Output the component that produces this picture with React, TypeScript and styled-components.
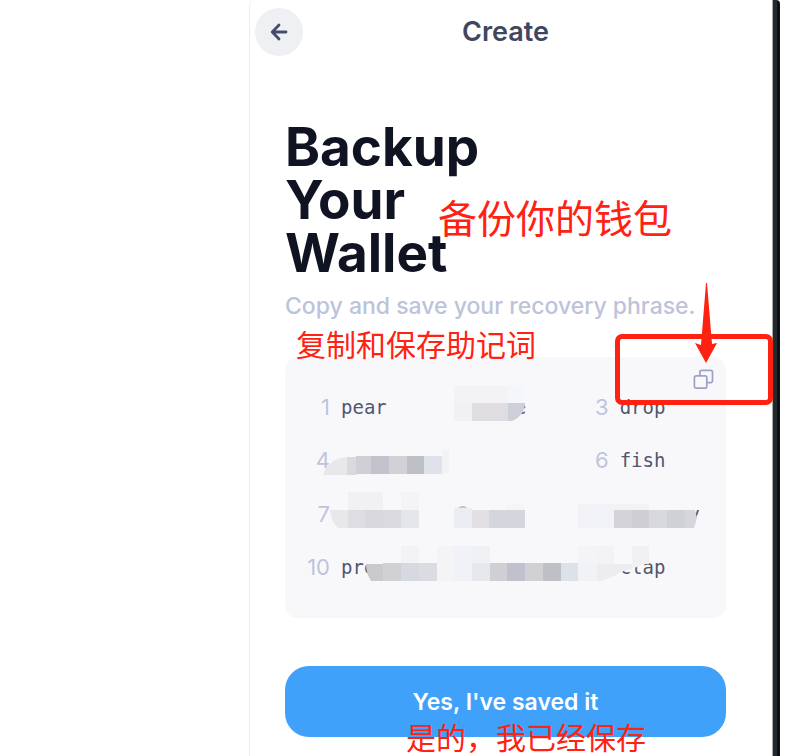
import React from "react";
import styled, { createGlobalStyle } from "styled-components";

const GlobalStyle = createGlobalStyle`
  *, *::before, *::after { box-sizing: border-box; }
  body { margin: 0; background: #fff; font-family: Inter, "Noto Sans CJK SC", sans-serif; }
`;

const RED = "#ff2112";

const Page = styled.div`
  display: flex;
  min-height: 100vh;
  padding: 0 20px 0 249px;
  overflow: hidden;
`;

const Screen = styled.main`
  flex: 1;
  min-width: 0;
  border-left: 1px solid #ededf0;
  border-top-left-radius: 6px;
`;

const DeviceEdge = styled.div`
  width: 8px;
  flex: none;
  border-left: 1px solid #a5a7a9;
  border-top-right-radius: 4px;
  background: linear-gradient(to right, #24292b 0 4px, #0b1016 4px);
`;

const Header = styled.header`
  display: grid;
  grid-template-columns: 48px 1fr 48px;
  align-items: center;
  padding: 8px 16px 0 5px;
`;

const BackButton = styled.button`
  display: grid;
  place-items: center;
  width: 48px;
  height: 48px;
  padding: 0;
  border: 0;
  border-radius: 50%;
  background: #eff0f4;
  color: #454c6d;
`;

const Title = styled.h1`
  margin: 0;
  text-align: center;
  font-size: 27px;
  line-height: 32px;
  font-weight: 600;
  color: #3f4760;
`;

const Content = styled.div`
  display: flex;
  flex-direction: column;
  padding: 65px 46px 0 35px;
`;

const Intro = styled.section`
  position: relative;
`;

const Heading = styled.h2`
  width: min-content;
  margin: 0;
  font-size: 53px;
  line-height: 53px;
  font-weight: 700;
  color: #101322;
`;

const Subtitle = styled.p`
  margin: 10px 0 0;
  font-size: 23px;
  line-height: 32px;
  font-weight: 500;
  white-space: nowrap;
  color: #bdc3da;
`;

const Note = styled.span<{ $size: number; $top: number; $left: number }>`
  position: absolute;
  z-index: 2;
  top: ${(p) => p.$top}px;
  left: ${(p) => p.$left}px;
  font-family: "Noto Sans CJK SC", sans-serif;
  font-size: ${(p) => p.$size}px;
  line-height: 34px;
  font-weight: 400;
  white-space: nowrap;
  color: ${RED};
  pointer-events: none;
`;

const Card = styled.section`
  position: relative;
  margin-top: 35px;
  padding: 23px 0 24px 23px;
  border-radius: 13px;
  background: #f8f8fb;
`;

const CopyButton = styled.button`
  position: absolute;
  top: 12px;
  right: 12px;
  display: grid;
  padding: 0;
  border: 0;
  background: none;
  color: #9ba2c6;
`;

const Phrase = styled.ol`
  display: grid;
  grid-template-columns: repeat(3, 1fr);
  grid-template-rows: repeat(4, 1fr);
  height: 214px;
  margin: 0;
  padding: 0;
  list-style: none;
`;

const Entry = styled.li`
  display: flex;
  align-items: center;
  gap: 11px;
  min-width: 0;
`;

const Index = styled.span`
  display: flex;
  justify-content: flex-end;
  width: 22px;
  flex: none;
  font-size: 22px;
  line-height: 28px;
  color: #bfc4dc;
`;

const Word = styled.span`
  font-family: "DejaVu Sans Mono", monospace;
  font-size: 19px;
  line-height: 28px;
  white-space: pre;
  color: #50576e;
`;

const Mosaic = styled.svg`
  position: absolute;
  inset: 0;
  pointer-events: none;
`;

const Highlight = styled.div`
  position: absolute;
  z-index: 2;
  top: -23px;
  right: -47px;
  width: 158px;
  height: 71px;
  border: 5px solid ${RED};
  border-radius: 7px;
  pointer-events: none;
`;

const Pointer = styled.svg`
  position: absolute;
  z-index: 2;
  top: -74px;
  right: 9px;
  pointer-events: none;
`;

const Actions = styled.div`
  position: relative;
  margin-top: 48px;
`;

const SaveButton = styled.button`
  display: block;
  width: 100%;
  height: 71px;
  padding: 0;
  border: 0;
  border-radius: 24px;
  background: #3fa1f9;
  font-family: inherit;
  font-size: 23px;
  font-weight: 600;
  color: #fff;
`;

const words = [
  { n: 1, word: "pear" },
  { n: 2, word: "   e" },
  { n: 3, word: "drop" },
  { n: 4, word: "" },
  { n: null, word: "" },
  { n: 6, word: "fish" },
  { n: 7, word: "" },
  { n: 8, word: "" },
  { n: null, word: "      y" },
  { n: 10, word: "pre" },
  { n: null, word: "" },
  { n: null, word: "clap" },
];

const tiles: [number, number, number, number, string][] = [
  [454, 386, 54, 18, "#f3f3f5"], [508, 386, 17, 18, "#f5f6fb"],
  [454, 403, 18, 18, "#f1f1f5"], [472, 403, 36, 18, "#dfdde1"],
  [347, 457, 9, 18, "#dadade"], [356, 456, 15, 18, "#cfcfd5"],
  [371, 456, 18, 18, "#c2c2cc"], [389, 456, 18, 18, "#d2d1d6"],
  [407, 456, 17, 18, "#bfc0c5"], [424, 456, 18, 18, "#dfe2ea"],
  [442, 450, 7, 24, "#f3f3f6"],
  [348, 492, 35, 18, "#f1f1f3"], [401, 492, 18, 18, "#f4f4f6"],
  [348, 510, 17, 18, "#dddde2"], [365, 510, 18, 18, "#d9d9dd"],
  [383, 510, 18, 18, "#dbdbdf"], [401, 510, 18, 18, "#e5e6e9"],
  [454, 508, 18, 20, "#ecedf2"], [472, 510, 17, 18, "#e2e0e3"],
  [489, 510, 36, 18, "#d4d5dd"], [507, 504, 18, 6, "#f5f5f8"],
  [578, 504, 18, 24, "#f3f2f6"], [596, 504, 18, 24, "#f1f3f8"],
  [614, 504, 35, 6, "#f3f3f5"], [614, 510, 18, 18, "#d4d3d9"],
  [632, 510, 17, 18, "#cfced4"], [649, 510, 18, 18, "#d8d9df"],
  [667, 510, 18, 18, "#d0d1d6"],
  [366, 555, 35, 9, "#f8f8fb"], [401, 546, 18, 18, "#f3f3f6"],
  [437, 546, 17, 35, "#f4f4f7"], [454, 546, 18, 35, "#f0f2f7"],
  [472, 546, 18, 18, "#f0f1f5"], [472, 563, 18, 18, "#e7e8ec"],
  [383, 563, 18, 18, "#d1d0d5"], [401, 563, 18, 18, "#d6d9e2"],
  [419, 563, 18, 18, "#dbdce1"], [490, 563, 17, 18, "#cfcfd4"],
  [507, 563, 18, 18, "#c0c1cc"], [525, 563, 18, 18, "#d0d0d5"],
  [543, 563, 18, 18, "#bfc0c5"], [561, 563, 17, 18, "#dde1e9"],
  [578, 546, 19, 18, "#f4f4f6"], [578, 563, 19, 18, "#f1f2f6"],
  [597, 546, 17, 18, "#f3f3f5"], [614, 546, 18, 18, "#f8f8fb"],
  [632, 546, 17, 18, "#f1f1f3"],
];

const shapes: [string, string][] = [
  ["M508 403h17c0 8-5 15-13 18h-4z", "#cdcfd9"],
  ["M323 475c3-10 11-17 24-18v18z", "#e8e7e9"],
  ["M330 510h18v18h-10c-5-5-7-11-8-18z", "#e8e8ea"],
  ["M685 510h10l2 8-3 10h-9z", "#d6d6db"],
  ["M366 564h17v17h-12c-3-5-5-10-5-17z", "#c9c9ce"],
  ["M597 564h17v12l-13 5h-4z", "#ededf1"],
  ["M614 564h18v5c-7 1-12 3-18 7z", "#ededf1"],
  ["M632 563h14c-5 2-9 4-14 6z", "#f1f1f4"],
];

function BackIcon() {
  return (
    <svg width="18" height="18" viewBox="0 0 18 18" fill="none" stroke="currentColor" strokeWidth="2.8" strokeLinecap="round" strokeLinejoin="round" aria-hidden="true">
      <path d="M16 9H2.5M9 2 2.2 9 9 16" />
    </svg>
  );
}

function CopyIcon() {
  return (
    <svg width="21" height="21" viewBox="0 0 21 21" fill="none" stroke="currentColor" strokeWidth="1.7" strokeLinejoin="round" aria-hidden="true">
      <rect x="1.4" y="6.8" width="12.4" height="12.4" rx="1.8" />
      <path d="M6.9 6.8V3.2a1.8 1.8 0 0 1 1.8-1.8h9a1.8 1.8 0 0 1 1.8 1.8v8.6a1.8 1.8 0 0 1-1.8 1.8h-3.9" />
    </svg>
  );
}

export default function App() {
  return (
    <>
      <GlobalStyle />
      <Page>
        <Screen>
          <Header>
            <BackButton type="button" aria-label="Back">
              <BackIcon />
            </BackButton>
            <Title>Create</Title>
          </Header>
          <Content>
            <Intro>
              <Heading>Backup Your Wallet</Heading>
              <Subtitle>Copy and save your recovery phrase.</Subtitle>
              <Note $size={39} $top={78} $left={153}>备份你的钱包</Note>
              <Note $size={30} $top={205} $left={11}>复制和保存助记词</Note>
            </Intro>
            <Card>
              <Phrase>
                {words.map((w, i) => (
                  <Entry key={i}>
                    <Index>{w.n}</Index>
                    <Word>{w.word}</Word>
                  </Entry>
                ))}
              </Phrase>
              <Mosaic width="441" height="261" viewBox="285 357 441 261" shapeRendering="crispEdges" aria-hidden="true">
                {tiles.map(([x, y, w, h, fill], i) => (
                  <rect key={i} x={x} y={y} width={w} height={h} fill={fill} />
                ))}
                {shapes.map(([d, fill], i) => (
                  <path key={i} d={d} fill={fill} shapeRendering="auto" />
                ))}
              </Mosaic>
              <CopyButton type="button" aria-label="Copy recovery phrase">
                <CopyIcon />
              </CopyButton>
              <Highlight />
              <Pointer width="22" height="81" viewBox="0 0 22 81" aria-hidden="true">
                <path d="M11 0h1L17 61l5-1L11 80 0 60l6 2z" fill={RED} />
              </Pointer>
            </Card>
            <Actions>
              <SaveButton type="button">Yes, I've saved it</SaveButton>
              <Note $size={30} $top={53} $left={121}>是的，我已经保存</Note>
            </Actions>
          </Content>
        </Screen>
        <DeviceEdge />
      </Page>
    </>
  );
}
